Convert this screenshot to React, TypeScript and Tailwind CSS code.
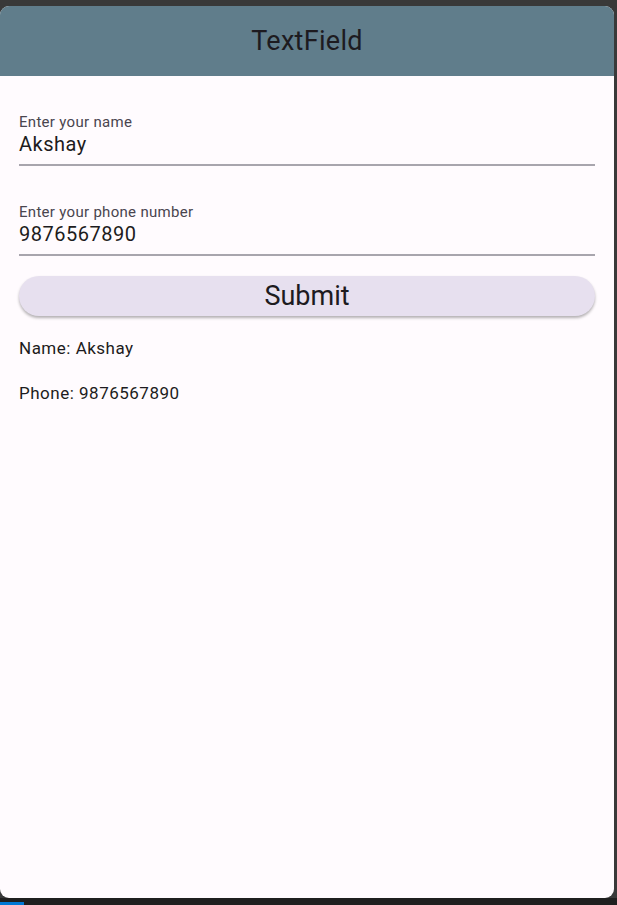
const Field = ({ label, value }: { label: string; value: string }) => (
  <div className="flex flex-col border-b-2 border-[#a8a5ad] pb-[7px]">
    <span className="text-[15px] leading-[18px] text-[#49454f] tracking-[0.3px]">{label}</span>
    <span className="text-[20px] leading-[26px] text-[#1d1b20] tracking-[0.5px]">{value}</span>
  </div>
);

export default function App() {
  return (
    <div className="h-[905px] bg-[#393939] flex flex-col font-['Roboto',sans-serif]">
      <div className="flex-1 flex flex-col mt-[6px] mr-[3px] rounded-[9px] overflow-hidden bg-[#fffbfe]">
        <div className="h-[70px] bg-[#607d8b] flex items-center justify-center">
          <h1 className="text-[27px] tracking-[0.3px] text-[#1d1b20]">TextField</h1>
        </div>
        <div className="flex flex-col px-[19px] pt-[37px]">
          <Field label="Enter your name" value="Akshay" />
          <div className="h-[37px]" />
          <Field label="Enter your phone number" value="9876567890" />
          <button className="mt-[20px] h-[40px] rounded-full bg-[#e7e0ef] text-[27px] text-[#1d1b20] shadow-[0_2px_3px_rgba(0,0,0,0.3)]">
            Submit
          </button>
          <p className="mt-[22px] text-[17px] leading-[20px] tracking-[0.5px] text-[#1d1b20]">Name: Akshay</p>
          <p className="mt-[25px] text-[17px] leading-[20px] tracking-[0.5px] text-[#1d1b20]">Phone: 9876567890</p>
        </div>
      </div>
      <div className="h-[7px] bg-[#1f1f1f] flex items-end">
        <div className="w-[24px] h-[3px] bg-[#0078d4]" />
      </div>
    </div>
  );
}
